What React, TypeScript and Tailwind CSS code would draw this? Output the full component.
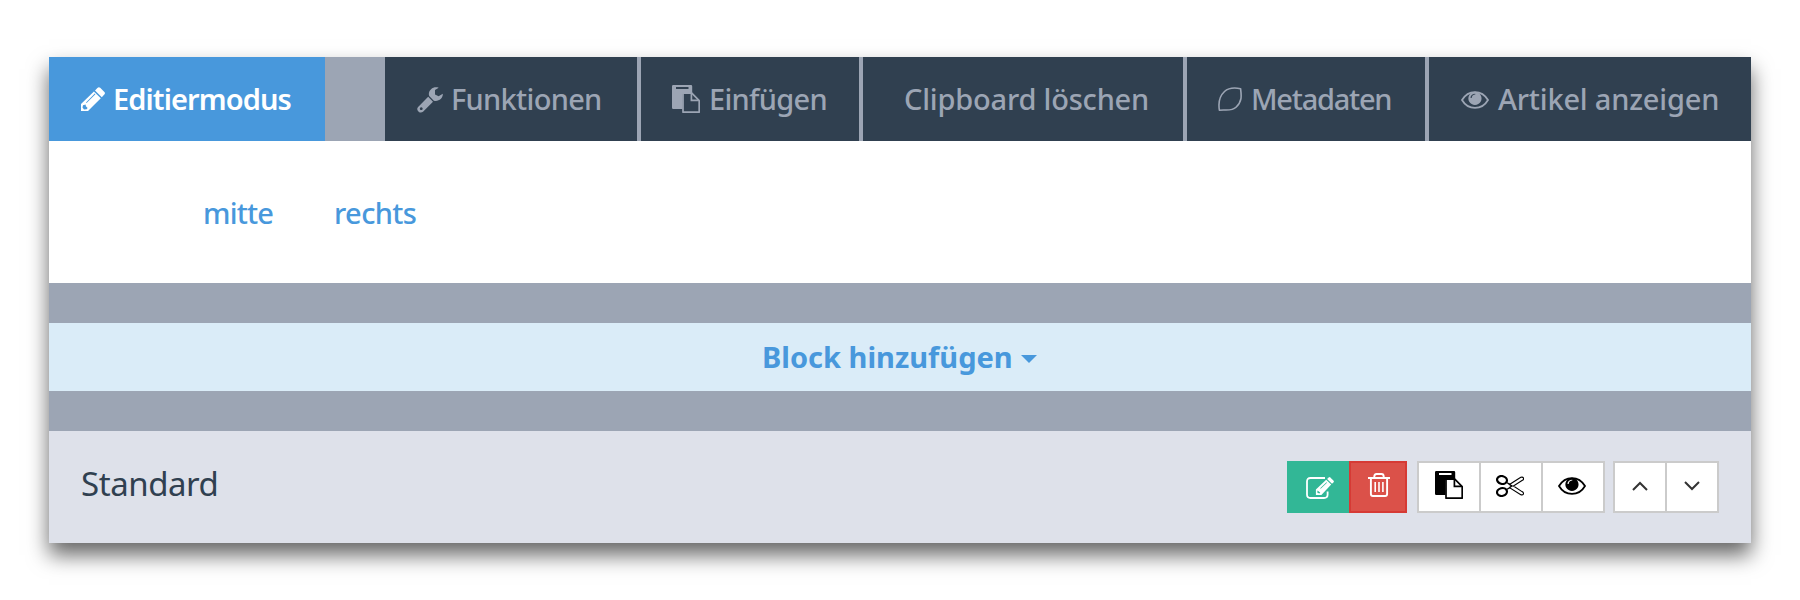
import type { ReactNode } from "react";

function Pencil() {
  return (
    <svg className="mt-[30px] h-6 w-6 shrink-0" viewBox="0 0 24 24" fill="currentColor">
      <path fillRule="evenodd" d="M0 17 12.9 4.4 19.8 11.2 7 24H0ZM2 18.2 1.5 20.6 3 22.4 5.6 22.2 6.6 21 4.9 19.2 4.6 17.4ZM5 15.4 5.6 16 14.4 7.2 13.8 6.6Z" />
      <path d="M14 3.4 16.4 1Q17.8-.5 19.2.8L23.4 5Q24.5 6.3 23.3 7.6L20.8 10.2Z" />
    </svg>
  );
}

function Wrench() {
  return (
    <svg className="mt-[30px] h-[26px] w-[26px] shrink-0" viewBox="0 0 26 26" fill="currentColor">
      <path fillRule="evenodd" d="M11.2 9.8 16 14.8 6 24.8Q3.7 26.6 1.4 24.4-.8 22 1.1 20ZM4.2 20.3a1.4 1.4 0 1 0 .1 0Z" />
      <path d="M21.7.7C17-.9 12 2 11.8 7.2L12.2 9.1 16.8 13.7C21.6 15 26.2 11.4 25.8 6.8L21.6 9.2 18 7.4V3Z" />
    </svg>
  );
}

function Paste({ className, page }: { className: string; page: string }) {
  return (
    <svg className={className} viewBox="0 0 28 28">
      <path fillRule="evenodd" fill="currentColor" d="M1.2 0H19Q20.2 0 20.2 1.2V9H10.5V24H1.2Q0 24 0 22.8V1.2Q0 0 1.2 0ZM4 2V4H16.5V2Z" />
      <path d="M11 8.2H19.8L27.2 15.6V27.2H11Z" className={page} stroke="currentColor" strokeWidth="1.7" strokeLinejoin="round" />
      <path d="M19.4 8.4V15.3H27" fill="none" stroke="currentColor" strokeWidth="1.7" />
    </svg>
  );
}

function Leaf() {
  return (
    <svg className="mt-[30px] h-6 w-6 shrink-0" viewBox="0 0 24 24" fill="none" stroke="currentColor" strokeWidth="1.6" strokeLinejoin="round">
      <path d="M22.6 1.7C17.5.6 11 .4 6.5 4.5 1 9.600.2 16 1.400 23.200 7 22.200 13.500 24.600 18 20.200 24.200 14.300 23.500 9 22.600 1.700Z" />
    </svg>
  );
}

function Eye({ className }: { className: string }) {
  return (
    <svg className={className} viewBox="0 0 28 18">
      <path d="M1 9C7.200-1.600 20.800-1.600 27 9 20.800 19.600 7.200 19.600 1 9Z" fill="none" stroke="currentColor" strokeWidth="1.800" />
      <path fillRule="evenodd" fill="currentColor" d="M14 .8a6.600 6.600 0 1 1-.1 0ZM14.300 2.800C11.300 2.800 9.500 4.800 9.500 7H10.700C10.700 5.200 12.100 3.700 14.300 3.600Z" />
    </svg>
  );
}

function Tab({ className, icon, text, label }: { className: string; icon?: ReactNode; text: string; label: string }) {
  return (
    <button className={`flex h-[84px] shrink-0 items-start ${className}`}>
      {icon}
      <span className={`mt-[27px] whitespace-nowrap text-[29px] leading-[30px] ${text}`}>{label}</span>
    </button>
  );
}

export default function App() {
  return (
    <div className="h-[600px] w-[1800px] overflow-hidden bg-white px-[49px] pt-[57px] font-['Noto_Sans',sans-serif]">
      <main className="h-[486px] w-[1702px] bg-[#9ca5b4] shadow-[0_12px_20px_rgba(0,0,0,0.6)]">
        <nav className="flex h-[84px] text-[#9ca5b4]">
          <Tab className="mr-[60px] w-[276px] bg-[#4898dc] pl-8 text-white" icon={<Pencil />} text="ml-2 font-semibold tracking-[-0.9px]" label="Editiermodus" />
          <div className="flex gap-1">
            <Tab className="w-[252px] bg-[#304050] pl-8" icon={<Wrench />} text="ml-2 font-medium tracking-[-0.7px]" label="Funktionen" />
            <Tab className="w-[218px] bg-[#304050] pl-[31px]" icon={<Paste className="mt-7 h-7 w-7 shrink-0" page="fill-[#304050]" />} text="ml-[9px] font-medium tracking-[-0.7px]" label="Einfügen" />
            <Tab className="w-[320px] bg-[#304050] pl-[41px]" text="font-medium tracking-[-0.2px]" label="Clipboard löschen" />
            <Tab className="w-[238px] bg-[#304050] pl-[31px]" icon={<Leaf />} text="ml-[9px] font-medium tracking-[-1.25px]" label="Metadaten" />
            <Tab className="w-[322px] bg-[#304050] pl-8" icon={<Eye className="mt-[34px] h-[18px] w-7 shrink-0" />} text="ml-[9px] font-medium tracking-[-0.2px]" label="Artikel anzeigen" />
          </div>
        </nav>

        <section className="flex h-[142px] bg-white pl-[154px] pt-[57px] text-[29px] font-medium leading-[30px] text-[#4898dc]">
          <a className="w-[131px] tracking-[-0.8px]">mitte</a>
          <a className="tracking-[-0.6px]">rechts</a>
        </section>

        <button className="mt-10 flex h-[68px] w-full items-start bg-[#daecf8] pl-[713px] text-[29px] font-bold leading-[30px] text-[#4898dc]">
          <span className="mt-[19px] w-[259px] whitespace-nowrap text-left">Block hinzufügen</span>
          <svg className="mt-8 h-2 w-4" viewBox="0 0 16 8" fill="currentColor">
            <path d="M0 0H16L8 8Z" />
          </svg>
        </button>

        <section className="mt-10 flex h-28 items-start bg-[#dee1ea] pl-8 pr-8 pt-[30px]">
          <h2 className="mr-auto mt-[3px] text-[33px] leading-[40px] tracking-[-0.45px] text-[#304050]">Standard</h2>
          <div className="mr-2.5 flex text-white">
            <button className="flex h-[52px] w-[62px] bg-[#32b796] pl-[19px] pt-4">
              <svg className="h-[22px] w-7" viewBox="0 0 28 22">
                <path d="M19 1H4.500Q1 1 1 4.500V17.500Q1 21 4.500 21H18Q21.600 21 21.600 17.500V14.500" fill="none" stroke="currentColor" strokeWidth="1.800" />
                <path fillRule="evenodd" fill="currentColor" d="M9.900 12.500 20.200 2.800 25.200 7.600 15.400 18H9.900ZM11.400 13.600V15.800L13.400 16.400 14.200 15.500ZM14.200 11.300 14.700 11.800 21 5.800 20.500 5.300Z" />
                <path fill="currentColor" d="M21.100 1.900 22.700.4Q23.500-.3 24.300.4L27.400 3.400Q28.300 4.300 27.600 5.200L26 6.800Z" />
              </svg>
            </button>
            <button className="flex h-[52px] w-[58px] border-2 border-[#d63a35] bg-[#db5149] pl-[17px] pt-[10px]">
              <svg className="h-6 w-[22px]" viewBox="0 0 22 24" fill="none" stroke="currentColor" strokeWidth="1.900">
                <path d="M0 5H22M6.300 5V3.500Q6.300 1 8.500 1H13.500Q15.700 1 15.700 3.500V5" />
                <path d="M2.900 5V21Q2.900 23 4.900 23H17.100Q19.100 23 19.100 21V5" />
                <path d="M7.200 9V19M11 9V19M14.900 9V19" strokeWidth="1.600" />
              </svg>
            </button>
          </div>
          <div className="mr-2 flex h-[52px] w-[188px] border-2 border-[#cbcbcb] bg-white text-black">
            <button className="flex w-[62px] border-r-2 border-[#cbcbcb] pl-4 pt-2">
              <Paste className="h-7 w-7" page="fill-white" />
            </button>
            <button className="flex w-[62px] border-r-2 border-[#cbcbcb] pl-[15px] pt-3">
              <svg className="h-[22px] w-[28px]" viewBox="0 0 28 22" fill="none" stroke="currentColor">
                <ellipse cx="6" cy="5" rx="5" ry="3.900" strokeWidth="2.200" transform="rotate(15 6 5)" />
                <ellipse cx="6" cy="17" rx="5" ry="3.900" strokeWidth="2.200" transform="rotate(-15 6 17)" />
                <path d="M10.600 7.400 13.800 9.300 24.800 2.300Q26.800 1.600 27.600 3.200 27.800 4.800 26 5.600L17.400 11 26 16.600Q27.800 17.600 27.500 19 26.500 20.400 24.800 19.700L13.800 12.800 10.600 14.600" strokeWidth="1.100" />
                <path d="M11.700 8.200 16.300 11 11.600 13.900" strokeWidth="1.100" />
                <circle cx="14.500" cy="11" r=".7" strokeWidth=".8" />
              </svg>
            </button>
            <button className="flex w-[60px] pl-[15px] pt-[14px]">
              <Eye className="h-[18px] w-7" />
            </button>
          </div>
          <div className="flex h-[52px] w-[106px] border-2 border-[#cbcbcb] bg-white text-[#333]">
            <button className="flex w-[52px] border-r-2 border-[#cbcbcb] pl-[17px] pt-[18px]">
              <svg className="h-[10px] w-4" viewBox="0 0 16 10" fill="none" stroke="currentColor" strokeWidth="2">
                <path d="M1 9 8 2 15 9" />
              </svg>
            </button>
            <button className="flex w-[50px] pl-[17px] pt-[18px]">
              <svg className="h-[10px] w-4" viewBox="0 0 16 10" fill="none" stroke="currentColor" strokeWidth="2">
                <path d="M1 1 8 8 15 1" />
              </svg>
            </button>
          </div>
        </section>
      </main>
    </div>
  );
}
